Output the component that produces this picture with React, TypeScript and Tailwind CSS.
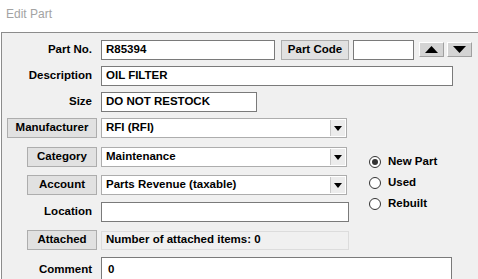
import type { ReactNode } from "react";

const FONT = "font-['Liberation_Sans',Arial,sans-serif]";

function Label({ children }: { children: ReactNode }) {
  return <div className="flex w-[99px] shrink-0 justify-end pr-[9px]">{children}</div>;
}

function TextBox({ value, w, h = "h-[20px]" }: { value?: string; w: string; h?: string }) {
  return (
    <div className={`${w} ${h} flex items-center border border-[#7a7a7a] bg-white pl-[4px] font-bold`}>{value}</div>
  );
}

function FormButton({ children, w }: { children: ReactNode; w: string }) {
  return (
    <div className={`${w} flex h-[20px] items-center justify-center border border-[#adadad] bg-[#e1e1e1] font-bold`}>
      {children}
    </div>
  );
}

function Select({ value }: { value: string }) {
  return (
    <div className="flex h-[20px] w-[246px] items-center border border-[#adadad] bg-white pl-[4px] font-bold">
      <span className="flex-1">{value}</span>
      <div className="mr-[1px] flex h-[16px] w-[15px] items-center justify-center border-l border-[#c8c8c8] bg-[#ececec]">
        <svg width="8" height="5" viewBox="0 0 8 5">
          <path d="M0 0h8L4 5z" fill="#000" />
        </svg>
      </div>
    </div>
  );
}

function Arrow({ up }: { up?: boolean }) {
  return (
    <div className="flex h-[15px] w-[25px] items-center justify-center border border-t-white border-l-white border-r-[#a0a0a0] border-b-[#a0a0a0] bg-[#d4d4d4]">
      <svg width="13" height="7" viewBox="0 0 13 7">
        <path d={up ? "M0 7h13L6.5 0z" : "M0 0h13L6.5 7z"} fill="#000" />
      </svg>
    </div>
  );
}

function Radio({ label, checked }: { label: string; checked?: boolean }) {
  return (
    <div className="flex h-[21px] items-center gap-[7px] font-bold">
      <div className="flex h-[12px] w-[12px] items-center justify-center rounded-full border border-[#333] bg-white">
        {checked && <div className="h-[6px] w-[6px] rounded-full bg-[#333]" />}
      </div>
      {label}
    </div>
  );
}

export default function App() {
  return (
    <div className={`${FONT} flex h-[279px] w-[478px] flex-col overflow-hidden bg-white text-[11.5px] text-black`}>
      <div className="h-[32px] shrink-0 pl-[6px] pt-[5px] text-[12px] text-[#a3a3a3]">Edit Part</div>
      <div className="ml-[1px] shrink-0 border-l border-t border-[#8c8c8c] bg-[#f0f0f0] pt-[7px] pb-[20px]">
        <div className="flex items-center">
          <Label>
            <span className="font-bold">Part No.</span>
          </Label>
          <TextBox value="R85394" w="w-[174px]" />
          <div className="ml-[6px]">
            <FormButton w="w-[68px]">Part Code</FormButton>
          </div>
          <div className="ml-[4px]">
            <TextBox w="w-[61px]" />
          </div>
          <div className="ml-[5px] mt-[-2px] flex gap-[3px]">
            <Arrow up />
            <Arrow />
          </div>
        </div>

        <div className="mt-[6px] flex items-center">
          <Label>
            <span className="font-bold">Description</span>
          </Label>
          <TextBox value="OIL FILTER" w="w-[352px]" />
        </div>

        <div className="mt-[6px] flex items-center">
          <Label>
            <span className="font-bold">Size</span>
          </Label>
          <TextBox value="DO NOT RESTOCK" w="w-[156px]" />
        </div>

        <div className="mt-[6px] flex items-center">
          <div className="flex w-[99px] shrink-0 justify-start pl-[5px]">
            <FormButton w="w-[90px]">Manufacturer</FormButton>
          </div>
          <Select value="RFI (RFI)" />
        </div>

        <div className="flex">
          <div className="flex flex-col">
            <div className="mt-[9px] flex items-center">
              <div className="flex w-[99px] shrink-0 justify-end pr-[4px]">
                <FormButton w="w-[70px]">Category</FormButton>
              </div>
              <Select value="Maintenance" />
            </div>
            <div className="mt-[8px] flex items-center">
              <div className="flex w-[99px] shrink-0 justify-end pr-[4px]">
                <FormButton w="w-[70px]">Account</FormButton>
              </div>
              <Select value="Parts Revenue (taxable)" />
            </div>
            <div className="mt-[7px] flex items-center">
              <Label>
                <span className="font-bold">Location</span>
              </Label>
              <TextBox w="w-[248px]" />
            </div>
          </div>
          <div className="ml-[20px] mt-[13px] flex flex-col">
            <Radio label="New Part" checked />
            <Radio label="Used" />
            <Radio label="Rebuilt" />
          </div>
        </div>

        <div className="mt-[8px] flex items-center">
          <div className="flex w-[99px] shrink-0 justify-end pr-[4px]">
            <FormButton w="w-[70px]">Attached</FormButton>
          </div>
          <div className="flex h-[19px] w-[248px] items-center border border-[#dcdcdc] pl-[4px] font-bold">
            Number of attached items: 0
          </div>
        </div>

        <div className="mt-[7px] flex items-start">
          <Label>
            <span className="pt-[4px] font-bold">Comment</span>
          </Label>
          <div className="h-[40px] w-[351px] border border-[#7a7a7a] bg-white pl-[6px] pt-[3px] font-bold">0</div>
        </div>
      </div>
    </div>
  );
}
